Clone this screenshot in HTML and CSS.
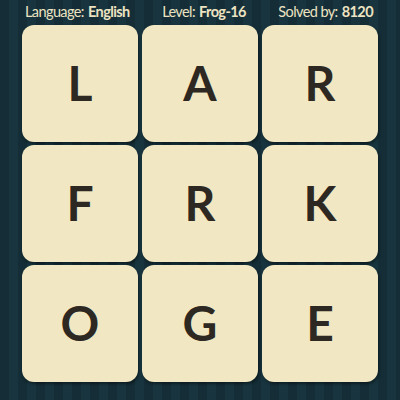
FILE: index.html
```html
<!DOCTYPE html>
<html>
<head>
<meta charset="utf-8">
<link rel="stylesheet" href="styles.css">
</head>
<body>
<div class="page">
  <div class="header">
    <span class="item">Language: <b>English</b></span>
    <span class="item">Level: <b>Frog-16</b></span>
    <span class="item">Solved by: <b>8120</b></span>
  </div>
  <div class="board">
    <div class="tile">L</div>
    <div class="tile">A</div>
    <div class="tile">R</div>
    <div class="tile">F</div>
    <div class="tile">R</div>
    <div class="tile">K</div>
    <div class="tile">O</div>
    <div class="tile">G</div>
    <div class="tile">E</div>
  </div>
</div>
</body>
</html>
```
FILE: styles.css
```css
html, body {
  margin: 0;
  padding: 0;
}
body {
  width: 400px;
  height: 400px;
  overflow: hidden;
  background-color: #152f38;
  background-image: repeating-linear-gradient(90deg, #142d36 0px, #142d36 9px, #18353f 9px, #18353f 18px);
  font-family: Lato, "Open Sans", sans-serif;
}
.page {
  display: flex;
  flex-direction: column;
}
.header {
  height: 25px;
  display: flex;
  justify-content: space-between;
  align-items: center;
  padding: 0 27px 0 25px;
  color: #ece3c2;
  font-size: 14.5px;
  letter-spacing: -0.6px;
  line-height: 1;
}
.item b {
  font-weight: 700;
  margin-left: 1px;
}
.board {
  display: grid;
  grid-template-columns: repeat(3, 116px);
  grid-template-rows: repeat(3, 117px);
  column-gap: 4px;
  row-gap: 3px;
  padding-left: 22px;
}
.tile {
  background: #f1e7c2;
  border-radius: 12px;
  box-shadow: 1px 2px 3px rgba(0, 0, 0, 0.4);
  display: flex;
  align-items: center;
  justify-content: center;
  color: #2d2821;
  font-size: 48px;
  font-weight: 700;
  line-height: 1;
  padding-bottom: 2px;
  box-sizing: border-box;
}
```
